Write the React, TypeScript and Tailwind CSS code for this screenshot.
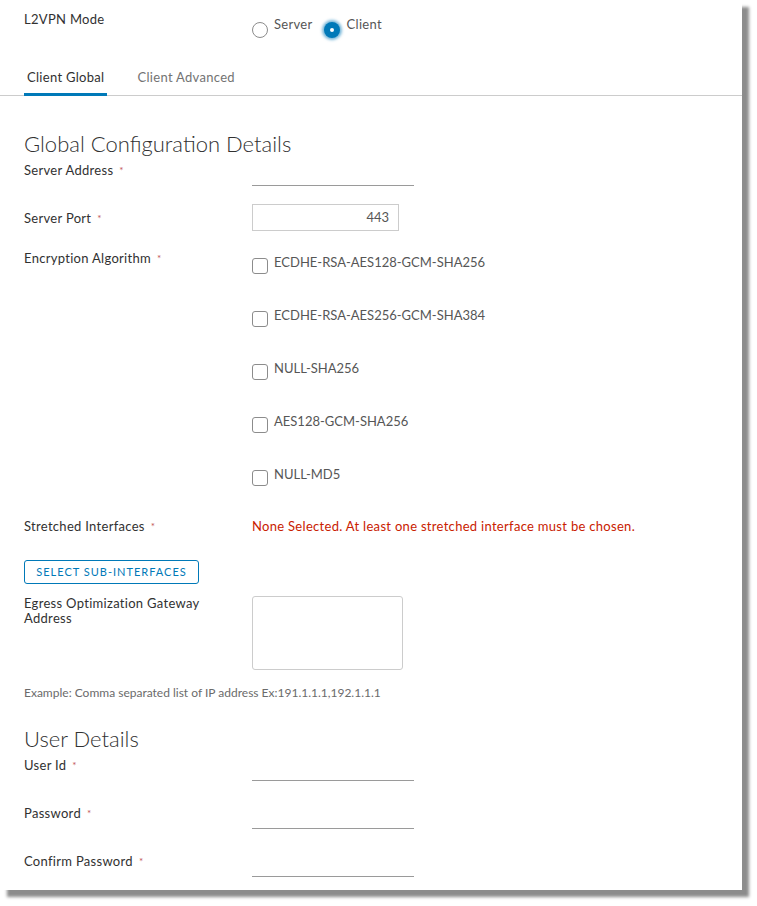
import React from 'react';

const font = { fontFamily: 'Lato, "Liberation Sans", sans-serif' };

function Req() {
  return <span className="ml-[6px] align-top text-[10px] text-[#c25656]">*</span>;
}

function Label({ children, req = true }: { children: React.ReactNode; req?: boolean }) {
  return (
    <div className="w-[228px] shrink-0 text-[13px] leading-[16px] tracking-[0.3px] text-[#313131]">
      {children}
      {req && <Req />}
    </div>
  );
}

function Underline() {
  return <div className="mt-[23px] h-[1px] w-[162px] bg-[#9a9a9a]" />;
}

const algorithms = [
  'ECDHE-RSA-AES128-GCM-SHA256',
  'ECDHE-RSA-AES256-GCM-SHA384',
  'NULL-SHA256',
  'AES128-GCM-SHA256',
  'NULL-MD5',
];

export default function App() {
  return (
    <div className="min-h-[906px] bg-white" style={font}>
      <div className="h-[890px] w-[742px] bg-white shadow-[7px_7px_3px_rgba(0,0,0,0.45)]">
        {/* Mode */}
        <div className="flex px-6 pt-[11px]">
          <Label req={false}>L2VPN Mode</Label>
          <div className="flex items-start gap-[6px] pt-[5px] text-[13px] tracking-[0.3px] text-[#565656]">
            <span className="mt-[6px] h-[16px] w-[16px] rounded-full border border-[#8c8c8c] bg-white" />
            <span className="leading-[16px]">Server</span>
            <span className="ml-[5px] mt-[6px] flex h-[16px] w-[16px] items-center justify-center rounded-full bg-[#0079b8] shadow-[0_0_3px_2px_rgba(0,121,184,0.55)]">
              <span className="h-[4px] w-[4px] rounded-full bg-white" />
            </span>
            <span className="ml-[1px] leading-[16px]">Client</span>
          </div>
        </div>

        {/* Tabs */}
        <div className="mt-[31px] flex border-b border-[#cccccc] pl-6 text-[13px] tracking-[0.3px]">
          <div className="-mb-[1px] border-b-[3px] border-[#0079b8] px-[3px] pb-[8px] leading-[16px] text-[#313131]">
            Client Global
          </div>
          <div className="ml-[30px] pb-[8px] leading-[16px] text-[#737373]">Client Advanced</div>
        </div>

        <div className="px-6">
          <h2 className="mt-[35px] text-[22px] font-light leading-[26px] text-[#313131]">
            Global Configuration Details
          </h2>

          <div className="mt-[5px] flex">
            <Label>Server Address</Label>
            <Underline />
          </div>

          <div className="mt-[18px] flex items-center">
            <Label>Server Port</Label>
            <div className="flex h-[27px] w-[147px] items-center justify-end border border-[#cccccc] pr-[9px] text-[13px] text-[#565656]">
              443
            </div>
          </div>

          <div className="mt-[19px] flex">
            <Label>Encryption Algorithm</Label>
            <div className="flex flex-col gap-[33px] pt-[4px]">
              {algorithms.map((a) => (
                <div key={a} className="flex items-start gap-[6px]">
                  <span className="mt-[4px] h-[16px] w-[16px] rounded-[3px] border border-[#8c8c8c] bg-white" />
                  <span className="text-[13px] leading-[16px] text-[#565656]">{a}</span>
                </div>
              ))}
            </div>
          </div>

          <div className="mt-[32px] flex">
            <Label>Stretched Interfaces</Label>
            <div className="text-[13px] leading-[16px] tracking-[0.3px] text-[#c92100]">
              None Selected. At least one stretched interface must be chosen.
            </div>
          </div>

          <button className="mt-[26px] block h-[24px] w-[175px] rounded-[3px] border border-[#0079b8] text-[11px] tracking-[1px] text-[#0079b8]">
            SELECT SUB-INTERFACES
          </button>

          <div className="mt-[12px] flex">
            <div className="w-[228px] shrink-0 text-[13px] leading-[15px] tracking-[0.3px] text-[#313131]">
              Egress Optimization Gateway
              <br />
              Address
            </div>
            <div className="h-[74px] w-[151px] rounded-[3px] border border-[#cccccc]" />
          </div>

          <div className="mt-[15px] text-[12px] leading-[16px] text-[#6b6b6b]">
            Example: Comma separated list of IP address Ex:191.1.1.1,192.1.1.1
          </div>

          <h2 className="mt-[25px] text-[22px] font-light leading-[26px] text-[#313131]">User Details</h2>

          <div className="mt-[5px] flex">
            <Label>User Id</Label>
            <Underline />
          </div>
          <div className="mt-[24px] flex">
            <Label>Password</Label>
            <Underline />
          </div>
          <div className="mt-[24px] flex">
            <Label>Confirm Password</Label>
            <Underline />
          </div>
        </div>
      </div>
    </div>
  );
}
